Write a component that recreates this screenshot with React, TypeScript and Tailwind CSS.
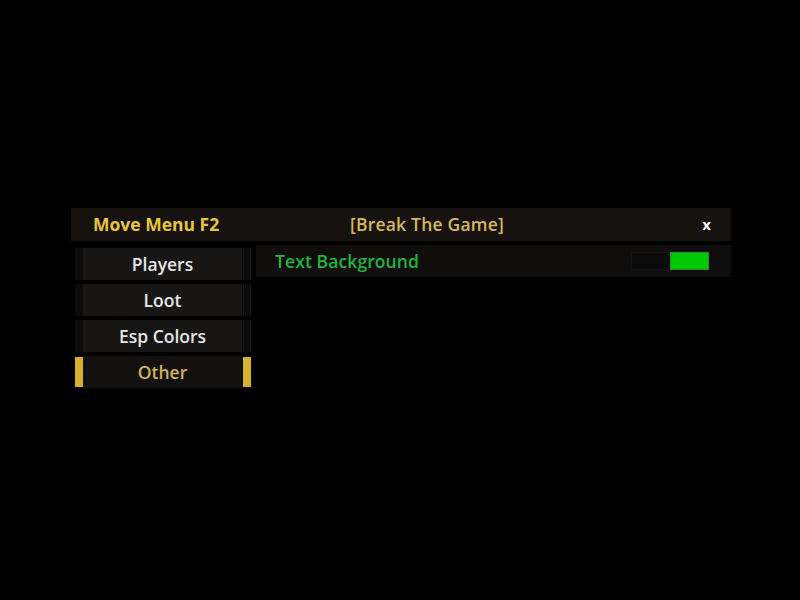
const tabs = ["Players", "Loot", "Esp Colors", "Other"];

function SideTab({ label, active }: { label: string; active?: boolean }) {
  return (
    <div className="flex h-[32px] items-stretch">
      <div className={active ? "my-[1px] w-[8px] bg-[#d6b32a]" : "w-[8px] bg-[#0c0b0a]"} />
      <div
        className={
          "flex w-[159px] items-center justify-center text-[17.5px] font-semibold " +
          (active ? "bg-[#121110] text-[#d2b457]" : "bg-[#171615] text-[#e6e6e6]")
        }
      >
        {label}
      </div>
      <div className="w-[1px]" />
      <div className={active ? "my-[1px] w-[8px] bg-[#d6b32a]" : "w-[8px] border-x border-[#1a1918] bg-[#0c0b0a]"} />
    </div>
  );
}

export default function App() {
  return (
    <div
      className="h-[600px] w-[800px] bg-black pl-[71px] pt-[208px]"
      style={{ fontFamily: '"Open Sans", "Noto Sans", sans-serif' }}
    >
      <div className="w-[660px]">
        <div className="flex h-[33px] items-center bg-[#151210] pl-[22px] pr-[20px]">
          <span className="w-[257px] text-[17.5px] font-bold text-[#e9c53a]">Move Menu F2</span>
          <span className="text-[17.5px] font-semibold tracking-[0.2px] text-[#d7b75c]">[Break The Game]</span>
          <span className="ml-auto text-[15px] font-bold text-white">x</span>
        </div>
        <div className="mt-[4px] flex">
          <div className="flex flex-col gap-[4px] pl-[4px] pt-[3px]">
            {tabs.map((t) => (
              <SideTab key={t} label={t} active={t === "Other"} />
            ))}
          </div>
          <div className="ml-[5px] flex h-[32px] flex-1 items-center bg-[#0f0e0d] pl-[19px] pr-[22px]">
            <span className="text-[17.5px] font-semibold tracking-[0.1px] text-[#20b43b]">Text Background</span>
            <div className="ml-auto flex h-[18px]">
              <div className="w-[39px] border border-[#141414] bg-[#0b0b0b]" />
              <div className="w-[39px] border border-[#2a8a2a] bg-[#00c800]" />
            </div>
          </div>
        </div>
      </div>
    </div>
  );
}
